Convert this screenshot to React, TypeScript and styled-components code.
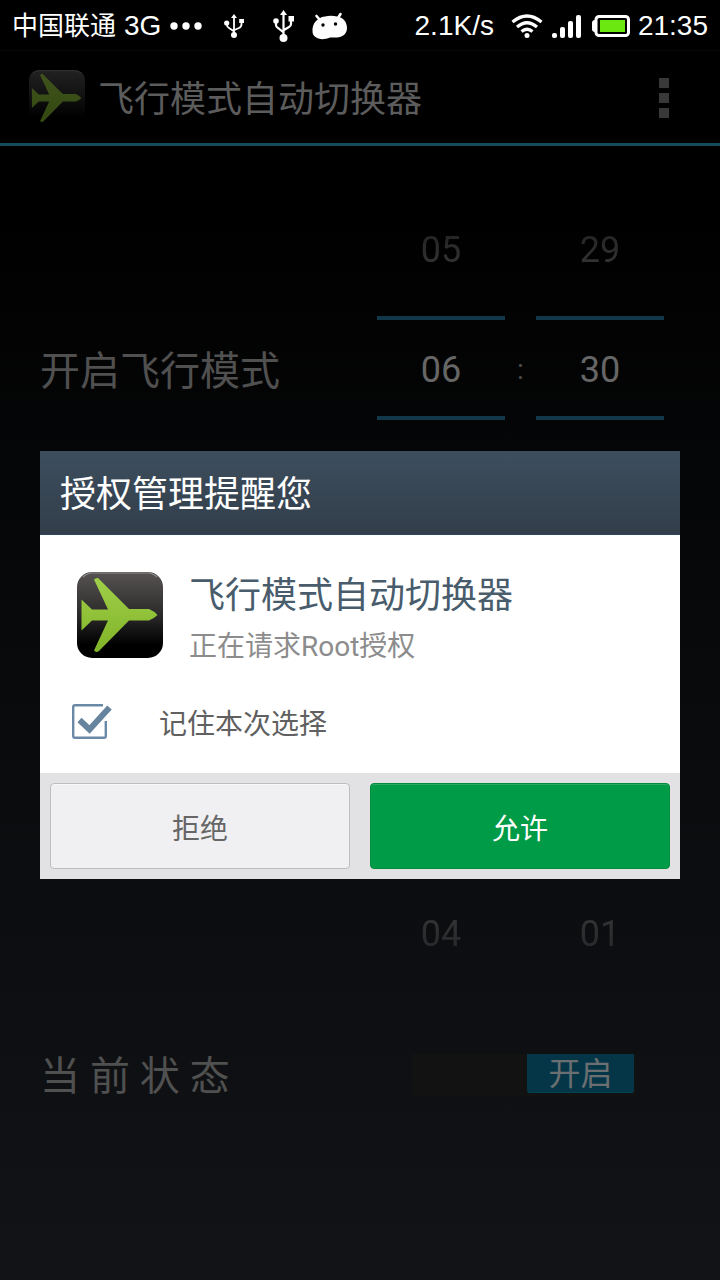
import React, { useState } from "react";
import styled, { createGlobalStyle } from "styled-components";

const GlobalStyle = createGlobalStyle`
  * { box-sizing: border-box; }
  body {
    margin: 0;
    background: #000;
    font-family: Roboto, "Noto Sans CJK SC", sans-serif;
  }
  button, input { font-family: inherit; margin: 0; }
`;

const Page = styled.div`
  min-height: 100vh;
  display: flex;
  flex-direction: column;
  background: linear-gradient(#000 0, #000 200px, #08090b 620px, #111316 100%);
`;

const StatusBar = styled.header`
  height: 51px;
  padding: 2px 12px 0;
  display: flex;
  align-items: center;
  justify-content: space-between;
  background: #000;
  border-bottom: 1px solid #080808;
  color: #fff;
  font-family: "Liberation Sans", "Noto Sans CJK SC", sans-serif;
  font-size: 28px;
  line-height: 32px;
  white-space: nowrap;
`;

const StatusGroup = styled.div<{ $gap: number }>`
  display: flex;
  align-items: center;
  gap: ${(p) => p.$gap}px;
`;

const Carrier = styled.span`
  display: flex;
  align-items: center;
  gap: 8px;
`;

const CarrierName = styled.span`
  font-size: 26px;
`;

const Icon = styled.svg`
  display: block;
  flex: none;
`;

const ActionBar = styled.div`
  height: 95px;
  padding: 2px 48px 0 29px;
  display: flex;
  align-items: center;
  gap: 13px;
  border-bottom: 3px solid #164a5e;
`;

const AppTitle = styled.h1`
  flex: 1;
  margin: 0;
  padding-top: 4px;
  font-size: 36px;
  line-height: 44px;
  font-weight: 400;
  color: #5c5c5c;
`;

const Dimmed = styled.span`
  display: block;
  opacity: 0.4;
`;

const MenuButton = styled.button`
  display: flex;
  flex-direction: column;
  gap: 5px;
  padding: 0 3px;
  border: 0;
  background: none;
`;

const MenuDot = styled.span`
  width: 10px;
  height: 10px;
  background: #383838;
`;

const Main = styled.main`
  padding: 0 56px 0 40px;
`;

const Section = styled.section`
  display: flex;
  align-items: center;
  justify-content: flex-end;
  padding: 42px 0;
`;

const SettingLabel = styled.span`
  flex: 1;
  padding-top: 8px;
  font-size: 40px;
  line-height: 48px;
  color: #505050;
  white-space: nowrap;
`;

const TimePicker = styled.div`
  display: flex;
  align-items: center;
`;

const Wheel = styled.div`
  width: 128px;
  display: grid;
  grid-template-rows: repeat(3, 120px);
  align-items: center;
  text-align: center;
  font-size: 36px;
  line-height: 40px;
`;

const Previous = styled.span`
  grid-row: 1;
  padding-top: 4px;
  color: #363636;
  mask-image: linear-gradient(rgba(0, 0, 0, 0.6), #000);
`;

const Current = styled.span`
  grid-row: 2;
  padding: 30px 0 26px;
  border-top: 4px solid #10374a;
  border-bottom: 4px solid #10374a;
  color: #666;
`;

const Next = styled.span`
  grid-row: 3;
  padding-top: 4px;
  color: #363738;
  mask-image: linear-gradient(#000, rgba(0, 0, 0, 0.6));
`;

const Colon = styled.span`
  width: 31px;
  padding-top: 4px;
  text-align: center;
  font-size: 28px;
  line-height: 32px;
  color: #505050;
`;

const StatusRow = styled.section`
  display: flex;
  align-items: center;
  justify-content: space-between;
  min-height: 78px;
  padding-right: 28px;
`;

const SwitchTrack = styled.label`
  position: relative;
  width: 224px;
  height: 42px;
  margin-top: 4px;
  padding: 0 2px 3px 0;
  display: flex;
  justify-content: flex-end;
  background: #121212;
`;

const SwitchInput = styled.input`
  position: absolute;
  inset: 0;
  width: 100%;
  height: 100%;
  opacity: 0;
`;

const SwitchThumb = styled.span`
  width: 107px;
  border-radius: 0 0 3px 3px;
  border-bottom: 1px solid #034255;
  background: #053648;
  color: #6b6f71;
  font-size: 32px;
  line-height: 41px;
  text-align: center;
`;

const Overlay = styled.div`
  position: fixed;
  inset: 50px 0 0;
  padding: 0 40px;
  display: flex;
  align-items: center;
`;

const Dialog = styled.div`
  flex: 1;
  background: #fff;
`;

const DialogTitle = styled.h2`
  margin: 0;
  padding: 22px 20px 17px;
  border-bottom: 1px solid #2d4660;
  background: linear-gradient(#3d4e5e, #323e4a);
  color: #fff;
  font-size: 36px;
  line-height: 44px;
  font-weight: 400;
`;

const DialogBody = styled.div`
  padding: 37px 32px 33px;
  display: flex;
  flex-direction: column;
  gap: 41px;
`;

const AppRow = styled.div`
  display: flex;
  align-items: flex-start;
  gap: 26px;
  padding-left: 5px;
`;

const AppName = styled.div`
  padding-top: 2px;
  color: #485c6c;
  font-size: 36px;
  line-height: 44px;
`;

const Request = styled.div`
  padding-top: 13px;
  color: #8c8c8c;
  font-size: 28px;
  line-height: 32px;
`;

const Remember = styled.label`
  display: flex;
  align-items: center;
  gap: 46px;
  color: #606060;
  font-size: 28px;
  line-height: 30px;
`;

const RememberText = styled.span`
  padding-top: 6px;
`;

const CheckCell = styled.span`
  display: grid;
  > * { grid-area: 1 / 1; }
`;

const CheckInput = styled.input`
  appearance: none;
  width: 41px;
  height: 36px;
`;

const CheckIcon = styled(Icon)`
  pointer-events: none;
`;

const Actions = styled.div`
  display: flex;
  gap: 20px;
  padding: 10px;
  background: #e2e2e4;
`;

const ActionButton = styled.button<{ $primary?: boolean }>`
  flex: 1;
  height: 86px;
  padding: 8px 0 0;
  border: 1px solid ${(p) => (p.$primary ? "#008c3c" : "#bcbdc0")};
  border-radius: 4px;
  background: ${(p) => (p.$primary ? "#009b46" : "#f0f0f2")};
  box-shadow: inset 0 1px 0 ${(p) => (p.$primary ? "#2aa962" : "#f8f8fa")};
  color: ${(p) => (p.$primary ? "#fff" : "#666")};
  font-size: 28px;
  line-height: 36px;
`;

const PlaneIcon = ({ size, id }: { size: number; id: string }) => (
  <Icon width={size} height={size} viewBox="0 0 86 86" aria-hidden="true">
    <defs>
      <linearGradient id={`${id}-tile`} x1="0" y1="0" x2="0" y2="1">
        <stop offset="0" stopColor="#575353" />
        <stop offset="0.5" stopColor="#2b2929" />
        <stop offset="0.85" stopColor="#000" />
      </linearGradient>
      <linearGradient id={`${id}-plane`} x1="0" y1="0" x2="0" y2="1">
        <stop offset="0" stopColor="#a0cf4a" />
        <stop offset="1" stopColor="#80b428" />
      </linearGradient>
    </defs>
    <rect width="86" height="86" rx="15" fill={`url(#${id}-tile)`} />
    <path d="M6 5Q10 1 16 1H70Q76 1 80 5" fill="none" stroke="#8a8888" strokeWidth="1.2" />
    <path
      d="M17 7.500Q19 5.500 21 6L52 37H72Q77 39 80.500 43Q77 46.500 72 48.500H52L22 79Q19 81 17 78.500L31 48.500H15L4.500 58.500V27.500L15 37.500H31Z"
      fill={`url(#${id}-plane)`}
    />
  </Icon>
);

const App = () => {
  const [remember, setRemember] = useState(true);
  const [enabled, setEnabled] = useState(true);

  return (
    <>
      <GlobalStyle />
      <Page>
        <StatusBar>
          <StatusGroup $gap={9}>
            <Carrier>
              <CarrierName>中国联通</CarrierName>
              <span>3G</span>
            </Carrier>
            <Icon width="32" height="8" viewBox="0 0 32 8" fill="#fff" aria-hidden="true">
              <circle cx="4" cy="4" r="3.700" />
              <circle cx="16" cy="4" r="3.700" />
              <circle cx="28" cy="4" r="3.700" />
            </Icon>
            <StatusGroup $gap={24}>
              <Icon width="38" height="24" viewBox="-13 0 38 24" aria-hidden="true">
                <path d="M10 3V20M3 9V11Q3 13 5 14L9.500 17M17.500 7V10Q17.500 13 15 14L10.500 16" fill="none" stroke="#fff" strokeWidth="1.800" />
                <path d="M10 0L13 4H7Z" fill="#fff" />
                <circle cx="10" cy="21" r="3" fill="#fff" />
                <circle cx="2.700" cy="9" r="2.600" fill="#fff" />
                <rect x="15.200" y="5" width="4.800" height="4" fill="#fff" />
              </Icon>
              <StatusGroup $gap={18}>
                <Icon width="21" height="32" viewBox="0 0 21 32" aria-hidden="true">
                  <path d="M10.500 4V27M3 11V15Q3 17 5 18L10 22M18 9V14Q18 16 16 17L11 20" fill="none" stroke="#fff" strokeWidth="2.200" />
                  <path d="M10.500 0L14 5H7Z" fill="#fff" />
                  <circle cx="10.500" cy="28" r="4" fill="#fff" />
                  <circle cx="3" cy="11" r="2.800" fill="#fff" />
                  <rect x="15.500" y="6" width="5.500" height="5.500" fill="#fff" />
                </Icon>
                <Icon width="36" height="28" viewBox="0 0 36 28" aria-hidden="true">
                  <path d="M8 8L4.500 4M26 6L28.500 2" stroke="#fff" strokeWidth="2.600" strokeLinecap="round" />
                  <path d="M0.500 19C0 12 5 5.500 13 4.500Q19 3 25 4.500C31 5 35 10 35 16C35 22 30 25.500 25 25.500H18C14 27 10 28 6.500 26.500C2.500 25 0.500 23 0.500 19Z" fill="#fff" />
                  <circle cx="11" cy="13" r="1.700" />
                  <circle cx="23.500" cy="12" r="1.700" />
                </Icon>
              </StatusGroup>
            </StatusGroup>
          </StatusGroup>
          <StatusGroup $gap={7}>
            <StatusGroup $gap={17}>
              <span>2.1K/s</span>
              <StatusGroup $gap={9}>
                <Icon width="32" height="24" viewBox="0 0 32 24" aria-hidden="true">
                  <path d="M1.500 8Q16 -4 30.500 8M6 13Q16 4.500 26 13M10.500 17.500Q16 13 21.500 17.500" fill="none" stroke="#fff" strokeWidth="3.200" />
                  <circle cx="16" cy="21.500" r="2.500" fill="#fff" />
                </Icon>
                <Icon width="29" height="24" viewBox="0 0 29 24" fill="#fff" aria-hidden="true">
                  <rect y="19" width="5" height="5" rx="2" />
                  <rect x="8" y="13" width="5" height="11" rx="2" />
                  <rect x="16" y="7" width="5" height="17" rx="2" />
                  <rect x="24" y="1" width="5" height="23" rx="2" />
                </Icon>
                <Icon width="41" height="22" viewBox="-3 0 41 22" aria-hidden="true">
                  <rect x="-1" y="5" width="7" height="12" rx="3" fill="#fff" />
                  <rect x="3" y="1.500" width="32.500" height="19" rx="3" fill="#000" stroke="#fff" strokeWidth="3" />
                  <rect x="7" y="5" width="25" height="12" fill="#6be810" />
                </Icon>
              </StatusGroup>
            </StatusGroup>
            <span>21:35</span>
          </StatusGroup>
        </StatusBar>

        <ActionBar>
          <Dimmed>
            <PlaneIcon size={56} id="bar" />
          </Dimmed>
          <AppTitle>飞行模式自动切换器</AppTitle>
          <MenuButton type="button" aria-label="Menu">
            <MenuDot />
            <MenuDot />
            <MenuDot />
          </MenuButton>
        </ActionBar>

        <Main>
          <Section>
            <SettingLabel>开启飞行模式</SettingLabel>
            <TimePicker>
              <Wheel>
                <Previous>05</Previous>
                <Current>06</Current>
              </Wheel>
              <Colon>:</Colon>
              <Wheel>
                <Previous>29</Previous>
                <Current>30</Current>
              </Wheel>
            </TimePicker>
          </Section>
          <Section>
            <TimePicker>
              <Wheel>
                <Next>04</Next>
              </Wheel>
              <Colon />
              <Wheel>
                <Next>01</Next>
              </Wheel>
            </TimePicker>
          </Section>
          <StatusRow>
            <SettingLabel id="state-label">当 前 状 态</SettingLabel>
            <SwitchTrack>
              <SwitchInput
                type="checkbox"
                role="switch"
                aria-labelledby="state-label"
                checked={enabled}
                onChange={(e) => setEnabled(e.target.checked)}
              />
              <SwitchThumb>开启</SwitchThumb>
            </SwitchTrack>
          </StatusRow>
        </Main>
      </Page>

      <Overlay>
        <Dialog role="dialog" aria-labelledby="dialog-title">
          <DialogTitle id="dialog-title">授权管理提醒您</DialogTitle>
          <DialogBody>
            <AppRow>
              <PlaneIcon size={86} id="dialog" />
              <div>
                <AppName>飞行模式自动切换器</AppName>
                <Request>正在请求Root授权</Request>
              </div>
            </AppRow>
            <Remember>
              <CheckCell>
                <CheckInput
                  type="checkbox"
                  checked={remember}
                  onChange={(e) => setRemember(e.target.checked)}
                />
                <CheckIcon width="41" height="36" viewBox="0 0 41 36" aria-hidden="true">
                  <path d="M31 1.200H3Q1.200 1.200 1.200 3V32Q1.200 33.800 3 33.800H32Q33.800 33.800 33.800 32V17" fill="none" stroke="#6a89a6" strokeWidth="2.400" />
                  {remember && (
                    <path d="M7.500 16L17.500 25.500L37.500 3.500" fill="none" stroke="#67849f" strokeWidth="6" />
                  )}
                </CheckIcon>
              </CheckCell>
              <RememberText>记住本次选择</RememberText>
            </Remember>
          </DialogBody>
          <Actions>
            <ActionButton type="button">拒绝</ActionButton>
            <ActionButton type="button" $primary>允许</ActionButton>
          </Actions>
        </Dialog>
      </Overlay>
    </>
  );
};

export default App;
